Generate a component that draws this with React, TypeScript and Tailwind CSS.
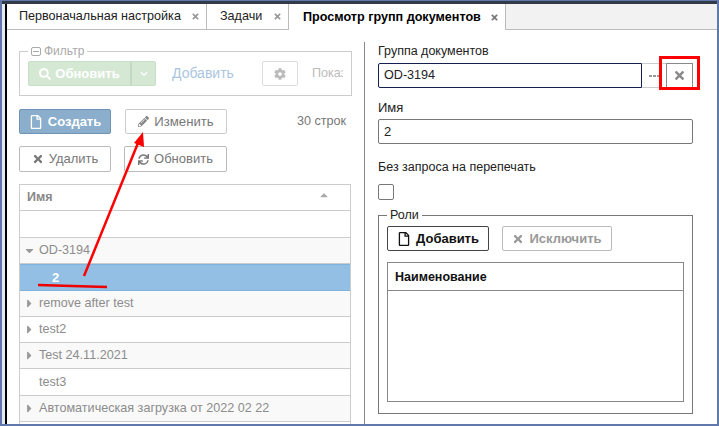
import React from 'react';
import { FaCaretDown, FaCaretRight, FaCaretUp, FaChevronDown, FaCog, FaPencilAlt, FaRegFile, FaSearch, FaSync, FaTimes } from 'react-icons/fa';

const ROWS = [
  { label: 'OD-3194', arrow: 'down', alt: true },
  { label: '2', selected: true },
  { label: 'remove after test', arrow: 'right', alt: true },
  { label: 'test2', arrow: 'right' },
  { label: 'Test 24.11.2021', arrow: 'right', alt: true },
  { label: 'test3' },
  { label: 'Автоматическая загрузка от 2022 02 22', arrow: 'right', alt: true },
  { label: '' },
];

function Tab({ label, box, active }: { label: string; box: string; active?: boolean }) {
  return (
    <div
      className={`flex h-full items-center justify-between border-r border-[#bbb] pr-[6px] ${box} ${
        active ? 'bg-white font-bold text-black' : 'border-b border-b-[#bbb] bg-white text-[#222]'
      }`}
    >
      <span className="whitespace-nowrap">{label}</span>
      <FaTimes className={active ? 'text-[9px] text-[#777]' : 'text-[9px] text-[#999]'} />
    </div>
  );
}

function Button({ children, className }: { children: React.ReactNode; className: string }) {
  return (
    <div className={`flex items-center justify-center gap-[5px] rounded-[2px] border ${className}`}>
      {children}
    </div>
  );
}

function TreeRow({ row }: { row: (typeof ROWS)[number] }) {
  if (row.selected) {
    return (
      <div className="flex h-[26.3px] items-center border-y border-[#7fb2dc] bg-[#92bfe3] pl-[32px] text-[13px] font-bold text-white">
        {row.label}
      </div>
    );
  }
  return (
    <div
      className={`flex h-[26.3px] items-center border-b border-[#ccc] text-[12.6px] text-[#8c8c8c] ${
        row.alt ? 'bg-[#f9f9f9]' : 'bg-white'
      }`}
    >
      <span className="flex w-[19px] justify-center text-[#999]">
        {row.arrow === 'down' && <FaCaretDown className="text-[13px]" />}
        {row.arrow === 'right' && <FaCaretRight className="text-[13px]" />}
      </span>
      <span className="whitespace-nowrap">{row.label}</span>
    </div>
  );
}

export default function App() {
  return (
    <div className="relative flex h-[426px] w-[719px] flex-col overflow-hidden border-x-2 border-b-2 border-[#6078ac] bg-white font-['Liberation_Sans',sans-serif] text-[12.6px] text-[#222]">
      <div className="h-[1px] shrink-0 bg-[#6078ac]" />
      <div className="h-[3px] shrink-0 bg-[#333a48]" />
      <div className="flex min-h-0 flex-1">
        <div className="w-[3px] shrink-0 bg-[#e4e9f3]" />
        <div className="w-[2px] shrink-0 bg-black" />
        <div className="flex min-w-0 flex-1 flex-col">
          <div className="flex h-[26px] shrink-0">
            <Tab label="Первоначальная настройка" box="w-[200px] pl-[12px]" />
            <Tab label="Задачи" box="w-[82px] pl-[13px]" />
            <Tab label="Просмотр групп документов" box="w-[217px] pl-[14px]" active />
            <div className="flex-1 border-b border-[#bbb] bg-[#f2f2f2]" />
          </div>

          <div className="flex min-h-0 flex-1">
            <div className="w-[357px] shrink-0 pl-[12px] pt-[14px]">
              <fieldset className="h-[52px] w-[332px] overflow-hidden border border-[#ccc] px-[8px]">
                <legend className="flex h-[14px] items-center gap-[3px] px-[3px] text-[12px] text-[#aaa]">
                  <span className="flex h-[9px] w-[10px] items-center justify-center rounded-[2px] border border-[#aaa]">
                    <span className="h-[1px] w-[6px] bg-[#aaa]" />
                  </span>
                  Фильтр
                </legend>
                <div className="flex items-center pt-[3px]">
                  <div className="flex h-[25px] w-[128px] overflow-hidden rounded-[2px] border border-[#c6dfc6] bg-[#d5e8d4] text-[13px] text-white">
                    <div className="flex flex-1 items-center justify-center gap-[4px] border-r-2 border-[#c5d8c4] font-bold">
                      <FaSearch className="text-[12px]" />
                      Обновить
                    </div>
                    <div className="flex w-[23px] items-center justify-center">
                      <FaChevronDown className="text-[8px]" />
                    </div>
                  </div>
                  <span className="ml-[16px] text-[14px] text-[#abc5df]">Добавить</span>
                  <div className="ml-[28px] flex h-[25px] w-[36px] items-center justify-center rounded-[2px] border border-[#ddd]">
                    <FaCog className="text-[12px] text-[#bbb]" />
                  </div>
                  <span className="ml-[14px] w-[31px] overflow-hidden whitespace-nowrap text-[12.6px] text-[#bbb]">Показать</span>
                </div>
              </fieldset>

              <div className="mt-[13px] flex items-center">
                <Button className="h-[25px] w-[92px] border-[#6f93b4] bg-[#8aaecb] text-[13px] font-bold text-white">
                  <FaRegFile className="text-[14px]" />
                  Создать
                </Button>
                <Button className="ml-[14px] h-[25px] w-[102px] border-[#ccc] text-[13.2px] text-[#777]">
                  <FaPencilAlt className="text-[11px] text-[#888]" />
                  Изменить
                </Button>
                <span className="ml-[70px] text-[#777]">30 строк</span>
              </div>

              <div className="mt-[12px] flex">
                <Button className="h-[26px] w-[92px] border-[#bbb] text-[13px] text-[#777]">
                  <FaTimes className="text-[12px] text-[#777]" />
                  Удалить
                </Button>
                <Button className="ml-[13px] h-[26px] w-[103px] border-[#bbb] text-[13px] text-[#777]">
                  <FaSync className="text-[11px] text-[#777]" />
                  Обновить
                </Button>
              </div>

              <div className="mt-[12px] w-[332px] border-x border-t border-[#ccc]">
                <div className="flex h-[26px] items-center justify-between border-b border-[#ccc] pl-[7px] pr-[20px] text-[12.5px] font-bold text-[#888]">
                  Имя
                  <FaCaretUp className="mb-[6px] text-[12px] text-[#aaa]" />
                </div>
                <div className="h-[27px] border-b border-[#ccc]" />
                {ROWS.map((row, i) => (
                  <TreeRow key={i} row={row} />
                ))}
              </div>
            </div>

            <div className="mt-[12px] w-[1px] shrink-0 bg-[#888]" />

            <div className="w-[328px] shrink-0 pl-[13px] pt-[14px] text-[12.5px]">
              <div className="h-[19px] leading-[15px]">Группа документов</div>
              <div className="flex h-[25px]">
                <div className="flex w-[264px] items-center rounded-l-[2px] border border-[#14204f] pl-[5px] text-[12.6px]">OD-3194</div>
                <div className="flex w-[24px] items-center justify-center gap-[1px] border-y border-[#ccc]">
                  <span className="h-[2px] w-[3px] bg-[#999]" />
                  <span className="h-[2px] w-[3px] bg-[#999]" />
                  <span className="h-[2px] w-[3px] bg-[#999]" />
                </div>
                <div className="flex w-[27px] items-center justify-center border border-[#888]">
                  <FaTimes className="text-[13px] text-[#888]" />
                </div>
              </div>

              <div className="mt-[12px] h-[14px] text-[13px] leading-[15px]">Имя</div>
              <div className="mt-[5px] flex h-[25px] w-[315px] items-center rounded-[2px] border border-[#777] pl-[5px] text-[13px]">2</div>

              <div className="mt-[16px] h-[15px] leading-[15px]">Без запроса на перепечать</div>
              <div className="mt-[9px] h-[16px] w-[16px] rounded-[2px] border border-[#777]" />

              <fieldset className="mt-[8px] h-[206px] w-[315px] border border-[#777] px-[8px]">
                <legend className="h-[14px] px-[3px] text-[12.5px] leading-[14px]">Роли</legend>
                <div className="flex pt-[4px]">
                  <Button className="h-[25px] w-[102px] border-[#444] text-[13px] font-bold text-[#111]">
                    <FaRegFile className="text-[14px]" />
                    Добавить
                  </Button>
                  <Button className="ml-[13px] h-[25px] w-[110px] border-[#bbb] text-[13px] font-bold text-[#999]">
                    <FaTimes className="text-[12px]" />
                    Исключить
                  </Button>
                </div>
                <div className="mt-[11px] h-[140px] w-[297px] border border-[#888]">
                  <div className="flex h-[28px] items-center border-b border-[#888] pl-[7px] pt-[1px] text-[12.5px] font-bold text-[#111]">
                    Наименование
                  </div>
                </div>
              </fieldset>
            </div>
          </div>
        </div>
      </div>

      {/* red annotations drawn over the screen */}
      <svg className="pointer-events-none absolute left-[-2px] top-0" width="719" height="426">
        <line x1="84" y1="276" x2="138" y2="143" stroke="#f00" strokeWidth="2.5" />
        <polygon points="143,132 134,143 144,147" fill="#f00" />
        <path d="M38 285 L72 286 L107 287" fill="none" stroke="#e00" strokeWidth="2.5" />
        <rect x="660.5" y="57.5" width="38" height="31" fill="none" stroke="#f00" strokeWidth="3" />
      </svg>
    </div>
  );
}
